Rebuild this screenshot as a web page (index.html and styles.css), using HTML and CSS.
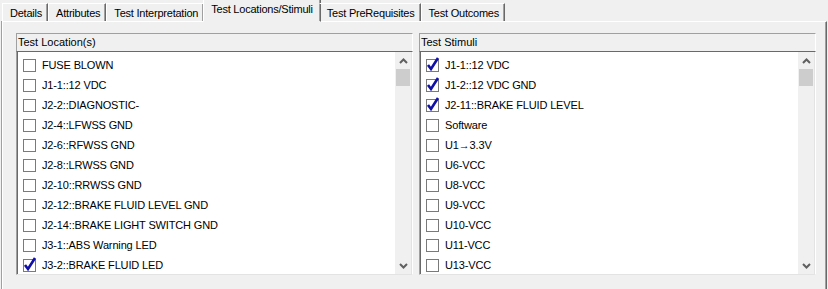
FILE: index.html
```html
<!DOCTYPE html>
<html>

<head>
  <title>Test Locations/Stimuli</title>
  <link rel="stylesheet" href="styles.css">
</head>

<body>
  <div class="tabs">
    <div class="tab">Details</div>
    <div class="tab">Attributes</div>
    <div class="tab">Test Interpretation</div>
    <div class="tab active">Test Locations/Stimuli</div>
    <div class="tab">Test PreRequisites</div>
    <div class="tab">Test Outcomes</div>
  </div>

  <div class="panel">
    <div class="group">
      <div class="group-title">Test Location(s)</div>
      <div class="list">
        <ul class="items">
          <li><span class="box"></span>FUSE BLOWN</li>
          <li><span class="box"></span>J1-1::12 VDC</li>
          <li><span class="box"></span>J2-2::DIAGNOSTIC-</li>
          <li><span class="box"></span>J2-4::LFWSS GND</li>
          <li><span class="box"></span>J2-6::RFWSS GND</li>
          <li><span class="box"></span>J2-8::LRWSS GND</li>
          <li><span class="box"></span>J2-10::RRWSS GND</li>
          <li><span class="box"></span>J2-12::BRAKE FLUID LEVEL GND</li>
          <li><span class="box"></span>J2-14::BRAKE LIGHT SWITCH GND</li>
          <li><span class="box"></span>J3-1::ABS Warning LED</li>
          <li><span class="box checked"><svg width="16" height="16" viewBox="0 0 16 16"><path d="M3 8 L6 12 L13 1" fill="none" stroke="#1010a8" stroke-width="2.6"/></svg></span>J3-2::BRAKE FLUID LED</li>
        </ul>
        <div class="scrollbar">
          <div class="arrow"><svg width="9" height="6" viewBox="0 0 9 6"><path d="M1 5 L4.5 1.5 L8 5" fill="none" stroke="#606060" stroke-width="2"/></svg></div>
          <div class="thumb"></div>
          <div class="track"></div>
          <div class="arrow"><svg width="9" height="6" viewBox="0 0 9 6"><path d="M1 1 L4.5 4.5 L8 1" fill="none" stroke="#606060" stroke-width="2"/></svg></div>
        </div>
      </div>
    </div>

    <div class="group">
      <div class="group-title">Test Stimuli</div>
      <div class="list">
        <ul class="items">
          <li><span class="box checked"><svg width="16" height="16" viewBox="0 0 16 16"><path d="M3 8 L6 12 L13 1" fill="none" stroke="#1010a8" stroke-width="2.6"/></svg></span>J1-1::12 VDC</li>
          <li><span class="box checked"><svg width="16" height="16" viewBox="0 0 16 16"><path d="M3 8 L6 12 L13 1" fill="none" stroke="#1010a8" stroke-width="2.6"/></svg></span>J1-2::12 VDC GND</li>
          <li><span class="box checked"><svg width="16" height="16" viewBox="0 0 16 16"><path d="M3 8 L6 12 L13 1" fill="none" stroke="#1010a8" stroke-width="2.6"/></svg></span>J2-11::BRAKE FLUID LEVEL</li>
          <li><span class="box"></span>Software</li>
          <li><span class="box"></span>U1&rarr;3.3V</li>
          <li><span class="box"></span>U6-VCC</li>
          <li><span class="box"></span>U8-VCC</li>
          <li><span class="box"></span>U9-VCC</li>
          <li><span class="box"></span>U10-VCC</li>
          <li><span class="box"></span>U11-VCC</li>
          <li><span class="box"></span>U13-VCC</li>
        </ul>
        <div class="scrollbar">
          <div class="arrow"><svg width="9" height="6" viewBox="0 0 9 6"><path d="M1 5 L4.5 1.5 L8 5" fill="none" stroke="#606060" stroke-width="2"/></svg></div>
          <div class="thumb"></div>
          <div class="track"></div>
          <div class="arrow"><svg width="9" height="6" viewBox="0 0 9 6"><path d="M1 1 L4.5 4.5 L8 1" fill="none" stroke="#606060" stroke-width="2"/></svg></div>
        </div>
      </div>
    </div>
  </div>
</body>

</html>
```

FILE: styles.css
```css
body {
  font-family: "Liberation Sans", Arial, sans-serif;
  font-size: 11px;
  color: #000;
  background-color: #f0f0f0;
  margin: 0;
  padding: 0 1px 0 2px;
  overflow: hidden;
}

.tabs {
  display: flex;
  align-items: flex-end;
  height: 21px;
  position: relative;
  z-index: 1;
  letter-spacing: -0.22px;
}

.tab {
  height: 17px;
  line-height: 18px;
  padding: 0 5px 0 7px;
  border-top: 1px solid #fff;
  border-left: 1px solid #fff;
  border-right: 1px solid #696969;
  box-shadow: inset -1px 0 #a0a0a0;
}

.tab.active {
  height: 21px;
  line-height: 18px;
  margin: 0 -2px -1px -1px;
  padding: 0 7px 0 7px;
  border-bottom: 1px solid #f0f0f0;
  background-color: #f0f0f0;
}

.tab.active + .tab {
  border-left-color: transparent;
}

.panel {
  display: grid;
  grid-template-columns: 397px 397px;
  gap: 6px;
  height: calc(100vh - 33px);
  padding: 11px 10px 0 13px;
  border-top: 1px solid #fff;
  border-left: 1px solid #fff;
  border-right: 1px solid #696969;
  box-shadow: inset -1px 0 #a0a0a0, -1px 0 #a0a0a0;
  align-content: start;
}

.group-title {
  height: 17px;
  line-height: 17px;
  padding-left: 1px;
  border-top: 1px solid #a0a0a0;
  border-left: 1px solid #a0a0a0;
  border-right: 1px solid #fff;
}

.list {
  display: flex;
  height: 222px;
  background-color: #fff;
  border-top: 1px solid #696969;
  border-left: 1px solid #a0a0a0;
  border-right: 1px solid #fff;
  border-bottom: 1px solid #e3e3e3;
  box-shadow: inset 1px 0 #696969, inset -1px 0 #e3e3e3;
}

.items {
  flex: 1;
  list-style: none;
  margin: 0;
  padding: 3px 0 0 6px;
  letter-spacing: -0.15px;
}

.items li {
  display: flex;
  align-items: center;
  height: 20px;
  white-space: nowrap;
}

.box {
  position: relative;
  width: 11px;
  height: 11px;
  border: 1px solid #7a7a7a;
  background-color: #fff;
  margin-right: 6px;
  flex-shrink: 0;
}

.box svg {
  position: absolute;
  left: -2px;
  top: -3px;
}

.scrollbar {
  display: flex;
  flex-direction: column;
  width: 16px;
  margin-right: 1px;
  background-color: #f0f0f0;
}

.arrow {
  height: 17px;
  display: flex;
  align-items: center;
  justify-content: center;
}

.thumb {
  height: 17px;
  margin: 0 1px;
  background-color: #cdcdcd;
}

.track {
  flex: 1;
}
```
